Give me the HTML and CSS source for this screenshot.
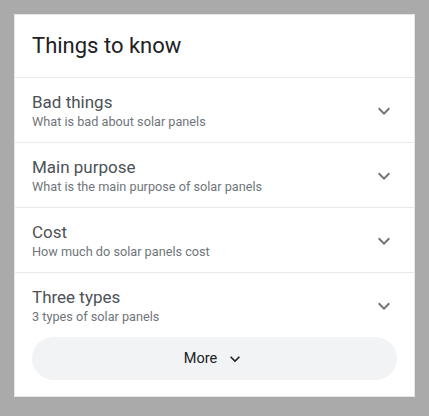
FILE: index.html
```html
<!DOCTYPE html>
<html>
<head>
<meta charset="utf-8">
<link rel="stylesheet" href="styles.css">
</head>
<body>
<div class="card">
  <div class="header">Things to know</div>
  <div class="row">
    <div class="text">
      <div class="title">Bad things</div>
      <div class="sub">What is bad about solar panels</div>
    </div>
    <svg class="chev" viewBox="0 0 24 24" width="24" height="24"><path d="M16.59 8.59L12 13.17 7.41 8.59 6 10l6 6 6-6z"/></svg>
  </div>
  <div class="row">
    <div class="text">
      <div class="title">Main purpose</div>
      <div class="sub">What is the main purpose of solar panels</div>
    </div>
    <svg class="chev" viewBox="0 0 24 24" width="24" height="24"><path d="M16.59 8.59L12 13.17 7.41 8.59 6 10l6 6 6-6z"/></svg>
  </div>
  <div class="row">
    <div class="text">
      <div class="title">Cost</div>
      <div class="sub">How much do solar panels cost</div>
    </div>
    <svg class="chev" viewBox="0 0 24 24" width="24" height="24"><path d="M16.59 8.59L12 13.17 7.41 8.59 6 10l6 6 6-6z"/></svg>
  </div>
  <div class="row last">
    <div class="text">
      <div class="title">Three types</div>
      <div class="sub">3 types of solar panels</div>
    </div>
    <svg class="chev" viewBox="0 0 24 24" width="24" height="24"><path d="M16.59 8.59L12 13.17 7.41 8.59 6 10l6 6 6-6z"/></svg>
  </div>
  <div class="more-wrap">
    <div class="more">
      <span>More</span>
      <svg class="more-chev" viewBox="0 0 24 24" width="20" height="20"><path d="M16.59 8.59L12 13.17 7.41 8.59 6 10l6 6 6-6z"/></svg>
    </div>
  </div>
</div>
</body>
</html>
```
FILE: styles.css
```css
html, body {
  margin: 0;
  padding: 0;
  background: #aaaaaa;
}
body {
  padding: 14px;
  font-family: Roboto, "Liberation Sans", Arial, sans-serif;
}
.card {
  width: 399px;
  background: #ffffff;
  border: 1px solid #e6e6e6;
  padding-bottom: 16px;
}
.header {
  padding: 17px 17px 17px 17px;
  font-size: 22px;
  line-height: 28px;
  color: #202124;
}
.row {
  display: flex;
  align-items: center;
  justify-content: space-between;
  border-top: 1px solid #e8eaed;
  padding: 14px 18px 12px 17px;
}
.title {
  font-size: 17px;
  line-height: 21px;
  color: #4d5156;
}
.sub {
  font-size: 12.7px;
  line-height: 17px;
  color: #70757a;
}
.chev {
  fill: #70757a;
  display: block;
}
.more-wrap {
  padding: 0 17px;
}
.more {
  height: 43px;
  border-radius: 22px;
  background: #f1f3f4;
  display: flex;
  align-items: center;
  justify-content: center;
  gap: 8px;
  font-size: 14.5px;
  color: #202124;
}
.more-chev {
  fill: #202124;
  display: block;
}
```
